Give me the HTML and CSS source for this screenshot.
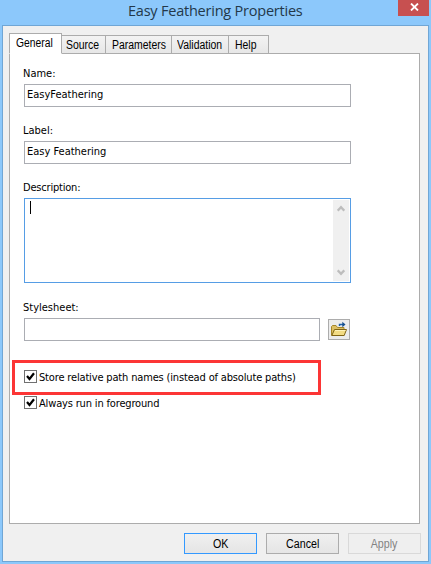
FILE: index.html
```html
<!DOCTYPE html>
<html lang="en">
<head>
<meta charset="utf-8">
<title>Easy Feathering Properties</title>
<link rel="stylesheet" href="styles.css">
</head>
<body>
<div class="window">
  <header class="titlebar">
    <h1 class="title">Easy Feathering Properties</h1>
    <button class="close" aria-label="Close"><svg width="9" height="8" viewBox="0 0 9 8"><path d="M1 .5l7 7M8 .5l-7 7" stroke="#fff" stroke-width="1.8"/></svg></button>
  </header>
  <main class="client">
    <nav class="tabs">
      <span class="tab active"><span>General</span></span>
      <span class="tab source"><span>Source</span></span>
      <span class="tab params"><span>Parameters</span></span>
      <span class="tab valid"><span>Validation</span></span>
      <span class="tab help"><span>Help</span></span>
    </nav>
    <section class="panel">
      <label class="label"><span>Name:</span></label>
      <div class="field"><span>EasyFeathering</span></div>
      <label class="label"><span>Label:</span></label>
      <div class="field"><span>Easy Feathering</span></div>
      <label class="label"><span class="l-desc">Description:</span></label>
      <div class="area">
        <i class="caret"></i>
        <div class="scroll">
          <svg width="8" height="7" viewBox="0 0 8 7"><path d="M.7 5.7L4 2.2l3.300 3.500" fill="none" stroke="#bdbdbd" stroke-width="2.300"/></svg>
          <svg width="8" height="7" viewBox="0 0 8 7"><path d="M.7 1.300L4 4.800l3.300-3.500" fill="none" stroke="#bdbdbd" stroke-width="2.300"/></svg>
        </div>
      </div>
      <label class="label"><span>Stylesheet:</span></label>
      <div class="row">
        <div class="field"></div>
        <button class="browse" aria-label="Browse">
          <svg width="18" height="17" viewBox="0 0 18 17">
            <path d="M1.500 14.500V5.500l1-1h3.500l1.500 2h6.500v2" fill="#dcbf62" stroke="#a58628"/>
            <path d="M1.800 14.500L4.500 8.500h12l-2.300 6z" fill="#f3dc84" stroke="#806414"/>
            <path d="M5 9.500h10.500" stroke="#fff3b8"/>
            <path d="M9.500 5V3.500H13" fill="none" stroke="#1d5fa8" stroke-width="1.400"/>
            <path d="M12.300 .8l3.200 2.700-3.200 2.700z" fill="#174f8e"/>
          </svg>
        </button>
      </div>
      <div class="highlight">
        <div class="check"><span class="box"><svg width="11" height="11" viewBox="0 0 11 11"><path d="M2 5l2.500 3L9 2.300" fill="none" stroke="#000" stroke-width="2.200"/></svg></span><span class="caption">Store relative path names (instead of absolute paths)</span></div>
      </div>
      <div class="check second"><span class="box"><svg width="11" height="11" viewBox="0 0 11 11"><path d="M2 5l2.500 3L9 2.300" fill="none" stroke="#000" stroke-width="2.200"/></svg></span><span class="caption">Always run in foreground</span></div>
    </section>
    <footer class="actions">
      <button class="btn default"><span>OK</span></button>
      <button class="btn"><span>Cancel</span></button>
      <button class="btn" disabled><span>Apply</span></button>
    </footer>
  </main>
</div>
</body>
</html>
```
FILE: styles.css
```css
* { box-sizing: border-box; }
body { margin: 0; font: 11px/13px "DejaVu Sans Condensed", "DejaVu Sans", sans-serif; font-stretch: condensed; color: #000; }
button { margin: 0; padding: 0; font: inherit; }
.window { width: 431px; height: 564px; background: #8cc8fb; padding: 0 2px; overflow: hidden; }
.titlebar { height: 25px; display: flex; justify-content: flex-end; }
.title { flex: 1; margin: 0; padding: 1px 0 0 126px; font: 400 14.500px/20px "Open Sans", sans-serif; color: #23384a; letter-spacing: -.22px; white-space: nowrap; }
.close { width: 31px; height: 16px; background: #c75050; border: 0; display: flex; align-items: center; justify-content: center; padding: 0 0 3px 1px; }
.client { width: 427px; height: 537px; border: 1px solid #70a6d5; background: #f0f0f0; padding: 7px 6px 0; }
.tabs { display: flex; align-items: flex-end; height: 21px; margin-bottom: -1px; position: relative; font: 12px/14px "Liberation Sans", sans-serif; }
.tab { height: 19px; border: 1px solid #acacac; border-left-width: 0; background: linear-gradient(#f3f3f3, #e7e7e7); padding: 2px 0 0 4px; white-space: nowrap; }
.tab span { display: inline-block; transform: scaleX(.87); transform-origin: 0 50%; }
.tab.active { width: 53px; height: 21px; border-left-width: 1px; border-bottom-color: #fff; background: #fff; padding: 2px 0 0 6px; }
.tab.active span { transform: scaleX(.86); }
.source { width: 44px; }
.params { width: 66px; padding-left: 6px; }
.valid { width: 57px; padding-left: 5px; }
.help { width: 40px; padding-left: 6px; }
.panel { width: 411px; height: 471px; border: 1px solid #acacac; background: #fff; padding: 12px 0 0 14px; }
.label { display: block; height: 18px; padding-top: 1px; white-space: nowrap; margin-left: -1px; }
.l-desc { letter-spacing: -.2px; }
.field { width: 327px; height: 23px; border: 1px solid #abadb3; margin-bottom: 16px; padding: 3px 0 0 2px; }
.area { width: 327px; height: 85px; border: 1px solid #569de5; display: flex; justify-content: space-between; padding: 1px; margin-bottom: 17px; }
.caret { width: 1px; height: 13px; background: #000; margin: 1px 0 0 4px; }
.scroll { width: 16px; background: #f0f0f0; display: flex; flex-direction: column; justify-content: space-between; align-items: center; padding: 5px 0; }
.row { display: flex; }
.row .field { width: 296px; margin: 0 8px 0 0; }
.browse { width: 22px; height: 21px; margin-top: 1px; border: 1px solid #acacac; background: #ececec; display: flex; align-items: center; justify-content: center; }
.highlight { width: 309px; height: 35px; border: 3px solid #fc3535; margin: 19px 0 0 -12px; padding: 7px 0 0 9px; }
.check { display: flex; gap: 2px; height: 13px; }
.caption { letter-spacing: -.16px; white-space: nowrap; padding-top: 1px; }
.box { flex: none; width: 13px; height: 13px; border: 1px solid #707070; display: flex; }
.second { margin-top: 1px; }
.actions { display: flex; justify-content: flex-end; gap: 9px; margin: 9px 1px 0 0; }
.btn { width: 73px; height: 21px; border: 1px solid #acacac; background: linear-gradient(#f0f0f0, #e5e5e5); font: 12px/19px "Liberation Sans", sans-serif; color: #000; }
.btn span { display: inline-block; transform: scaleX(.89); position: relative; top: 1px; }
.btn.default { border-color: #3399ff; }
.btn:disabled { color: #838383; border-color: #d9d9d9; background: #efefef; }
```
